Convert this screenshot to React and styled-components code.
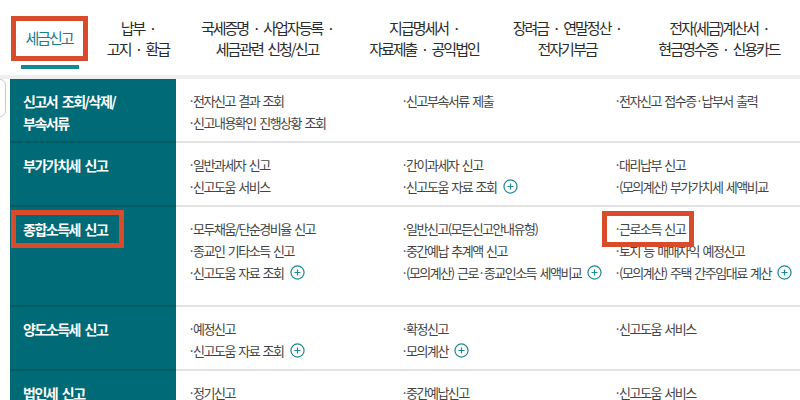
import React from 'react';
import styled, { createGlobalStyle, css } from 'styled-components';

const teal = '#006a76';
const red = '#d84b2b';

const GlobalStyle = createGlobalStyle`
  html, body {
    margin: 0;
    padding: 0;
    background: #fff;
  }
  body {
    font-family: 'Noto Sans CJK KR', 'Noto Sans', sans-serif;
    color: #444;
  }
`;

const Page = styled.div`
  position: relative;
  width: 800px;
  height: 400px;
  overflow: hidden;
`;

const TabBar = styled.nav`
  display: flex;
  height: 75px;
  padding-left: 10px;
  border-bottom: 4px solid #efefef;
`;

const Tab = styled.a`
  position: relative;
  flex: 0 0 ${p => p.$width}px;
  display: flex;
  align-items: center;
  justify-content: center;
  text-align: center;
  font-size: 15px;
  line-height: 21px;
  letter-spacing: -2px;
  word-spacing: 3px;
  white-space: nowrap;
  color: ${p => (p.$active ? '#17808a' : '#2b2b2b')};
  ${p =>
    p.$active &&
    css`
      &::after {
        content: '';
        position: absolute;
        left: 11px;
        bottom: 6px;
        width: 58px;
        height: 4px;
        background: #128a94;
      }
    `}
`;

// red annotation frame laid over the screenshot
const Mark = styled.span`
  position: absolute;
  left: ${p => p.$x}px;
  top: ${p => p.$y}px;
  width: ${p => p.$w}px;
  height: ${p => p.$h}px;
  border: 5px solid ${red};
  box-sizing: border-box;
  pointer-events: none;
  z-index: 2;
`;

const SideHandle = styled.div`
  position: absolute;
  left: -20px;
  top: 79px;
  width: 24px;
  height: 36px;
  border: 1px solid #c9c9c9;
  border-radius: 6px;
  background: #fff;
`;

const Board = styled.div`
  margin-left: 10px;
`;

const Row = styled.section`
  display: grid;
  grid-template-columns: 166px 1fr;
`;

const Label = styled.h3`
  position: relative;
  margin: 0;
  padding: 11px 13px 0;
  background: ${teal};
  color: #fff;
  font-size: 14px;
  font-weight: 700;
  line-height: 22px;
  letter-spacing: -1.5px;
  word-spacing: 3px;
  border-bottom: 2px solid #005a64;
`;

const Items = styled.ul`
  list-style: none;
  margin: 0;
  display: grid;
  grid-template-columns: repeat(3, 213px);
  grid-auto-rows: 22px;
  align-content: start;
  padding: 10px 0 ${p => p.$pad}px 12px;
  border-bottom: 2px solid #e3e3e3;
`;

const Item = styled.li`
  position: relative;
  display: flex;
  align-items: center;
  font-size: 13px;
  letter-spacing: -1.5px;
  word-spacing: 2px;
  color: #444;
  white-space: pre;

  &::before {
    content: '·';
    width: 5px;
    letter-spacing: 0;
  }
`;

const PlusIcon = styled.svg`
  flex: none;
  width: 15px;
  height: 15px;
  margin-left: 6px;
  color: #1d8a93;
`;

const More = () => (
  <PlusIcon viewBox="0 0 16 16" fill="none" stroke="currentColor" strokeWidth="1.3">
    <circle cx="8" cy="8" r="7" />
    <path d="M8 4.8v6.4M4.8 8h6.4" />
  </PlusIcon>
);

const tabs = [
  { w: 78, lines: ['세금신고'], active: true },
  { w: 100, lines: ['납부 ·', '고지 · 환급'] },
  { w: 158, lines: ['국세증명 · 사업자등록 ·', '세금관련 신청/신고'] },
  { w: 156, lines: ['지급명세서 ·', '자료제출 · 공익법인'] },
  { w: 130, lines: ['장려금 · 연말정산 ·', '전자기부금'] },
  { w: 174, lines: ['전자(세금)계산서 ·', '현금영수증 · 신용카드'] },
];

const rows = [
  {
    label: ['신고서 조회/삭제/', '부속서류'],
    pad: 8,
    items: [
      { t: '전자신고 결과 조회' },
      { t: '신고부속서류 제출' },
      { t: '전자신고 접수증·납부서 출력' },
      { t: '신고내용확인 진행상황 조회' },
    ],
  },
  {
    label: ['부가가치세 신고'],
    pad: 8,
    items: [
      { t: '일반과세자 신고' },
      { t: '간이과세자 신고' },
      { t: '대리납부 신고' },
      { t: '신고도움 서비스' },
      { t: '신고도움 자료 조회', more: true },
      { t: '(모의계산) 부가가치세 세액비교' },
    ],
  },
  {
    label: ['종합소득세 신고'],
    mark: true,
    pad: 22,
    items: [
      { t: '모두채움/단순경비율 신고' },
      { t: '일반신고(모든신고안내유형)' },
      { t: '근로소득 신고', mark: true },
      { t: '종교인 기타소득 신고' },
      { t: '중간예납 추계액 신고' },
      { t: '토지 등 매매차익 예정신고' },
      { t: '신고도움 자료 조회', more: true },
      { t: '(모의계산) 근로·종교인소득 세액비교', more: true },
      { t: '(모의계산) 주택 간주임대료 계산', more: true },
    ],
  },
  {
    label: ['양도소득세 신고'],
    pad: 8,
    items: [
      { t: '예정신고' },
      { t: '확정신고' },
      { t: '신고도움 서비스' },
      { t: '신고도움 자료 조회', more: true },
      { t: '모의계산', more: true },
    ],
  },
  {
    label: ['법인세 신고'],
    pad: 8,
    items: [
      { t: '정기신고' },
      { t: '중간예납신고' },
      { t: '신고도움 서비스' },
      { t: '신고도움 자료 조회', more: true },
    ],
  },
];

export default function App() {
  return (
    <Page>
      <GlobalStyle />
      <TabBar>
        {tabs.map((tab, i) => (
          <Tab key={i} $width={tab.w} $active={tab.active}>
            <span>
              {tab.lines.map((l, j) => (
                <React.Fragment key={j}>
                  {j > 0 && <br />}
                  {l}
                </React.Fragment>
              ))}
            </span>
            {tab.active && <Mark $x={1} $y={16} $w={77} $h={45} />}
          </Tab>
        ))}
      </TabBar>
      <SideHandle />
      <Board>
        {rows.map((row, i) => (
          <Row key={i}>
            <Label>
              {row.label.map((l, j) => (
                <React.Fragment key={j}>
                  {j > 0 && <br />}
                  {l}
                </React.Fragment>
              ))}
              {row.mark && <Mark $x={1} $y={3} $w={113} $h={38} />}
            </Label>
            <Items $pad={row.pad}>
              {row.items.map((it, j) => (
                <Item key={j}>
                  {it.t}
                  {it.more && <More />}
                  {it.mark && <Mark $x={-12} $y={-6} $w={92} $h={36} />}
                </Item>
              ))}
            </Items>
          </Row>
        ))}
      </Board>
    </Page>
  );
}
